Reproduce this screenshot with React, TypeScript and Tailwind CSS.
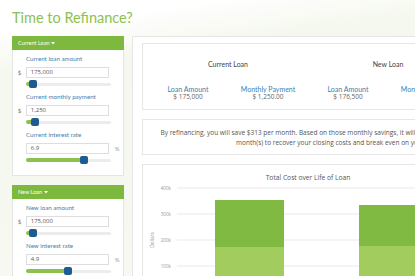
import React from 'react';

type FieldProps = {
  label: string;
  value: string;
  prefix?: string;
  suffix?: string;
  fill: number;
};

function Field({ label, value, prefix, suffix, fill }: FieldProps) {
  return (
    <div className="mb-[4px]">
      <div className="h-[10px] pl-[13px] text-[6.2px] leading-[10px] text-[#3d7fb0]">{label}</div>
      <div className="mt-[3px] flex items-center">
        <span className="w-[13px] text-center text-[6px] leading-[11px] text-[#777]">{prefix}</span>
        <div className="h-[11px] w-[85px] border border-[#dedede] bg-white pl-[4px] font-['Open_Sans',sans-serif] text-[6px] leading-[9px] text-[#555]">
          {value}
        </div>
        <span className="w-[14px] pl-[2px] text-center text-[6px] leading-[11px] text-[#999]">{suffix}</span>
      </div>
      {/* slider */}
      <div className="mt-[2px] ml-[13px] flex h-[8px] w-[85px] items-center">
        <div className="h-[4px] rounded-l-[2px] bg-[#8cc152]" style={{ width: fill }} />
        <div className="h-[8px] w-[8px] shrink-0 rounded-[2px] bg-[#1d5b90]" />
        <div className="h-[3px] flex-1 rounded-r-[2px] bg-[#ececec]" />
      </div>
    </div>
  );
}

function PanelHeader({ title }: { title: string }) {
  return (
    <div className="flex h-[14px] items-center gap-[2px] bg-[#7db83f] pl-[6px] text-[5.5px] text-white">
      <span>{title}</span>
      <svg width="4" height="3" viewBox="0 0 4 3">
        <path d="M0 0h4L2 2.5z" fill="#fff" />
      </svg>
    </div>
  );
}

const summaryCols = [
  { label: 'Loan Amount', value: '$ 175,000' },
  { label: 'Monthly Payment', value: '$ 1,250.00' },
  { label: 'Loan Amount', value: '$ 176,500' },
  { label: 'Monthly Payment', value: '$ 937.26' },
];

function CostChart() {
  const grid = [
    { y: 23, t: '400k' },
    { y: 49, t: '300k' },
    { y: 75, t: '200k' },
    { y: 101, t: '100k' },
    { y: 127, t: '0' },
  ];
  return (
    <svg width="332" height="130" viewBox="0 0 332 130" className="block">
      <text x="165" y="14.5" textAnchor="middle" fontSize="6.7" fill="#555" fontFamily="Open Sans, sans-serif">
        Total Cost over Life of Loan
      </text>
      {grid.map((g) => (
        <g key={g.t}>
          <line x1="34" x2="322" y1={g.y} y2={g.y} stroke="#e9e9e9" strokeWidth="1" />
          <text x="28" y={g.y + 1.8} textAnchor="end" fontSize="4.6" fill="#9a9a9a" fontFamily="Open Sans, sans-serif">
            {g.t}
          </text>
        </g>
      ))}
      <text
        x="11"
        y="75"
        textAnchor="middle"
        fontSize="4.8"
        fill="#8a8a8a"
        fontFamily="Open Sans, sans-serif"
        transform="rotate(-90 11 75)"
      >
        Dollars
      </text>
      <rect x="72" y="35" width="69" height="47" fill="#80ba42" />
      <rect x="72" y="82" width="69" height="45" fill="#a2cd5e" />
      <rect x="216" y="40" width="69" height="41" fill="#80ba42" />
      <rect x="216" y="81" width="69" height="46" fill="#a2cd5e" />
    </svg>
  );
}

export default function App() {
  return (
    <div className="h-screen w-full overflow-hidden bg-[linear-gradient(172deg,#ffffff_0%,#ffffff_9%,#f5f8ee_22%,#f7f9f2_100%)] px-[12px] pt-[9px] font-['Lato',sans-serif]">
      <h1 className="text-[14.5px] leading-[17px] text-[#8cc152]">Time to Refinance?</h1>

      <div className="mt-[10px] flex items-start">
        {/* Left inputs */}
        <div className="w-[112px] shrink-0">
          <PanelHeader title="Current Loan" />
          <div className="border border-t-0 border-[#e4e4e4] bg-white pt-[4px] pb-[7px]">
            <Field label="Current loan amount" value="175,000" prefix="$" fill={3} />
            <Field label="Current monthly payment" value="1,250" prefix="$" fill={5} />
            <Field label="Current interest rate" value="6.9" suffix="%" fill={54} />
          </div>

          <div className="mt-[9px]">
            <PanelHeader title="New Loan" />
            <div className="border border-t-0 border-[#e4e4e4] bg-white pt-[4px]">
              <Field label="New loan amount" value="175,000" prefix="$" fill={3} />
              <Field label="New interest rate" value="4.9" suffix="%" fill={38} />
            </div>
          </div>
        </div>

        {/* Right results */}
        <div className="ml-[8px] w-[434px] shrink-0 border border-[#e6e6e6] bg-white px-[9px] pt-[6px]">
          <div className="border border-[#e6e6e6] px-[5px] pt-[15px] pb-[9px]">
            <div className="flex w-[320px] text-[7px] leading-[10px] text-[#444]">
              <div className="w-[160px] text-center">Current Loan</div>
              <div className="w-[160px] text-center">New Loan</div>
            </div>
            <div className="mt-[17px] flex w-[320px]">
              {summaryCols.map((c, i) => (
                <div key={i} className="w-[80px] text-center">
                  <div className="text-[7px] leading-[7px] text-[#3d7fb0]">{c.label}</div>
                  <div className="font-['Open_Sans',sans-serif] text-[6.5px] leading-[7px] text-[#666]">{c.value}</div>
                </div>
              ))}
            </div>
          </div>

          <div className="mt-[9px] border border-[#e6e6e6] pt-[8px] pb-[6px] text-center font-['Open_Sans',sans-serif] text-[6.5px] leading-[10px] text-[#555]">
            By refinancing, you will save $313 per month. Based on those monthly savings, it will take 4.792332268370607028753993610
            <br />
            month(s) to recover your closing costs and break even on your refinancing.
          </div>

          <div className="mt-[9px] border border-[#e6e6e6]">
            <CostChart />
          </div>
        </div>
      </div>
    </div>
  );
}
